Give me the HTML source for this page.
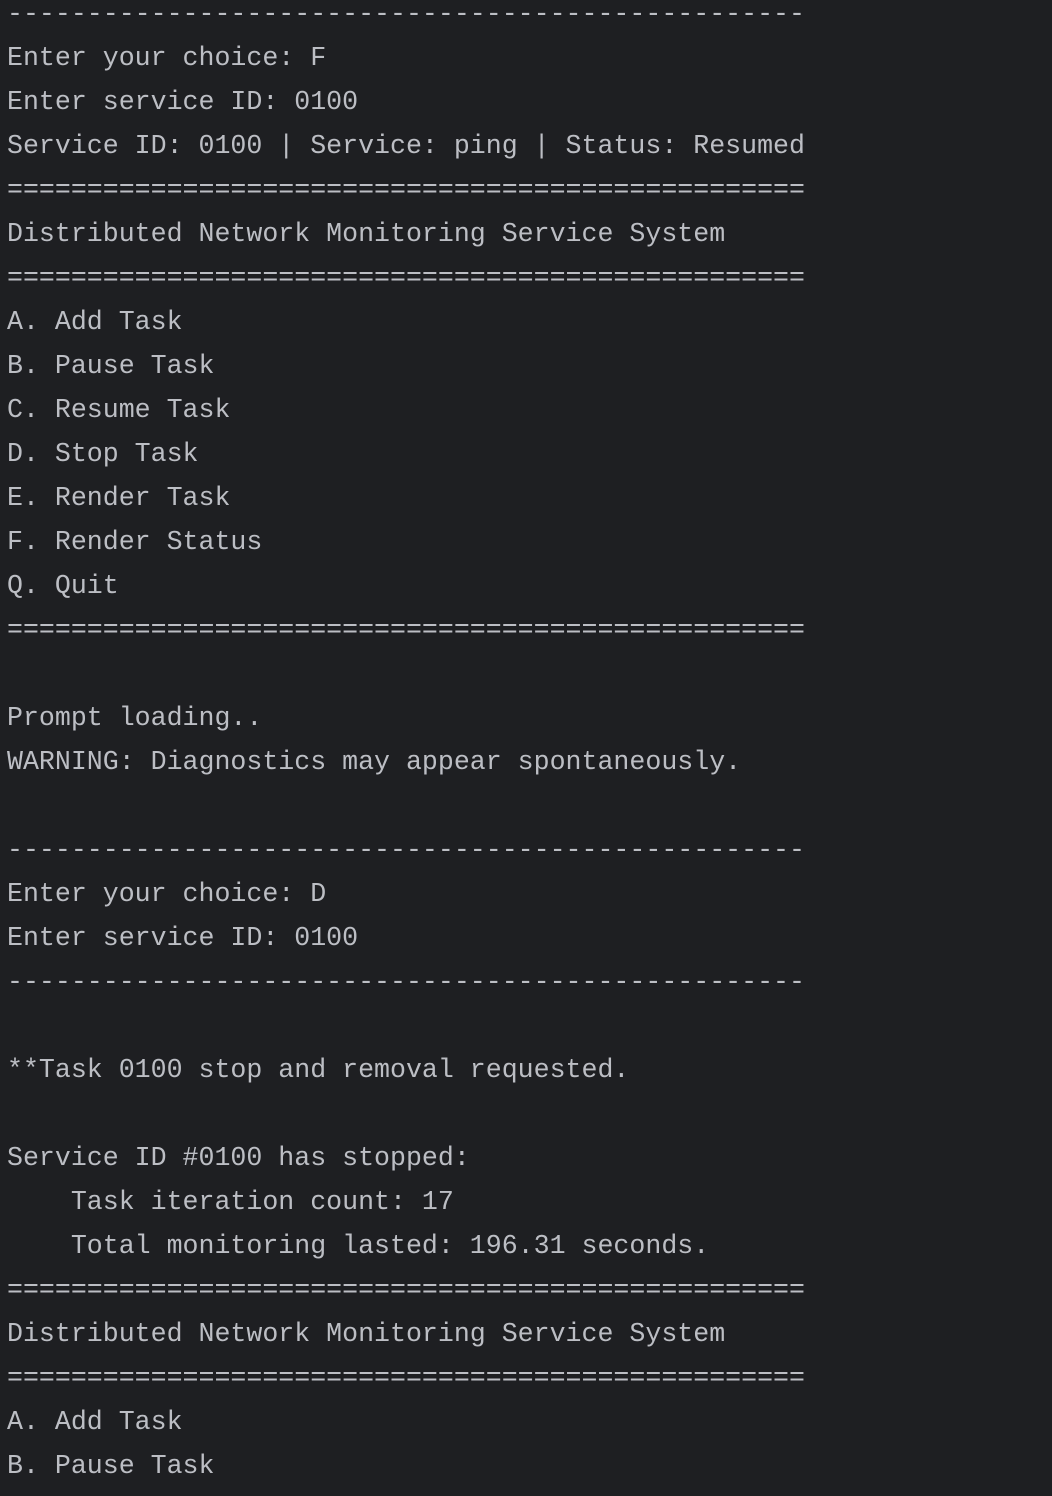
<!DOCTYPE html>
<html><head><meta charset="utf-8"><style>
html,body{margin:0;padding:0;background:#1e1f22;width:1052px;height:1496px;overflow:hidden}
pre{margin:0;position:absolute;left:7px;top:-8px;font-family:"Liberation Mono",monospace;font-size:26.6px;line-height:44px;color:#bcbec4;white-space:pre}
</style></head><body><pre>--------------------------------------------------
Enter your choice: F
Enter service ID: 0100
Service ID: 0100 | Service: ping | Status: Resumed
==================================================
Distributed Network Monitoring Service System
==================================================
A. Add Task
B. Pause Task
C. Resume Task
D. Stop Task
E. Render Task
F. Render Status
Q. Quit
==================================================

Prompt loading..
WARNING: Diagnostics may appear spontaneously.

--------------------------------------------------
Enter your choice: D
Enter service ID: 0100
--------------------------------------------------

**Task 0100 stop and removal requested.

Service ID #0100 has stopped:
    Task iteration count: 17
    Total monitoring lasted: 196.31 seconds.
==================================================
Distributed Network Monitoring Service System
==================================================
A. Add Task
B. Pause Task
</pre></body></html>
